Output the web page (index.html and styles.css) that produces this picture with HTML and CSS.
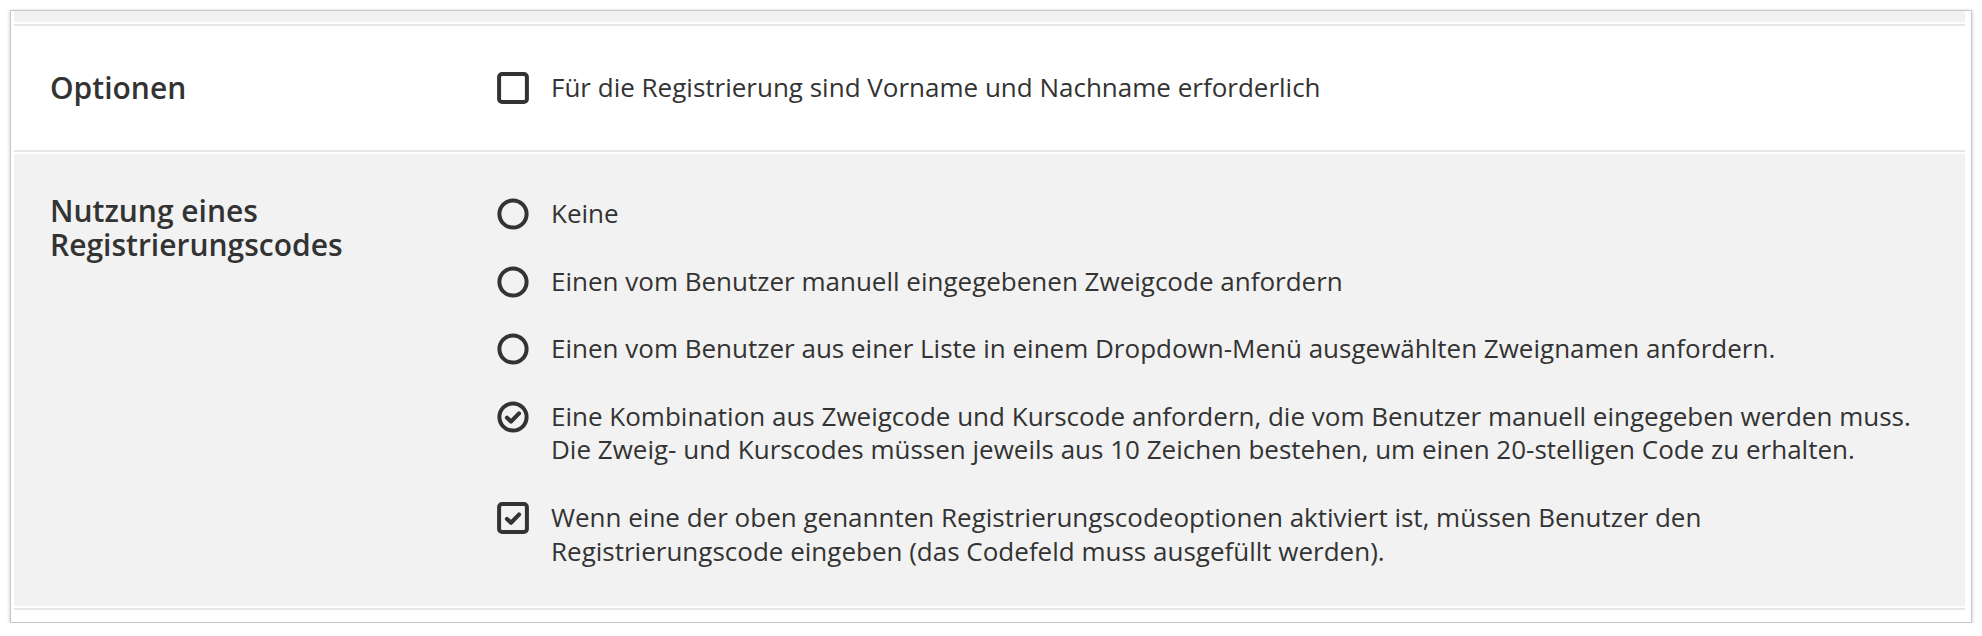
FILE: index.html
```html
<!DOCTYPE html>
<html lang="de">
<head>
<meta charset="utf-8">
<title>Registrierungsoptionen</title>
<link rel="stylesheet" href="styles.css">
</head>
<body>
<div class="card">
  <div class="strip"></div>
  <div class="gap"></div>
  <div class="line"></div>
  <div class="row row-white">
    <div class="label label-mid">Optionen</div>
    <div class="controls">
      <div class="item item-mid">
        <svg class="icon" viewBox="0 0 32 32" aria-hidden="true"><rect x="2.1" y="2.1" width="27.8" height="27.8" rx="3" fill="none" stroke="#333" stroke-width="4"/></svg>
        <span class="text">Für die Registrierung sind Vorname und Nachname erforderlich</span>
      </div>
    </div>
  </div>
  <div class="line"></div>
  <div class="gap"></div>
  <div class="row row-gray">
    <div class="label label-top">Nutzung eines<br>Registrierungscodes</div>
    <div class="controls">
      <div class="item">
        <svg class="icon" viewBox="0 0 32 32" aria-hidden="true"><circle cx="16" cy="16" r="13.6" fill="none" stroke="#333" stroke-width="4"/></svg>
        <span class="text">Keine</span>
      </div>
      <div class="item">
        <svg class="icon" viewBox="0 0 32 32" aria-hidden="true"><circle cx="16" cy="16" r="13.6" fill="none" stroke="#333" stroke-width="4"/></svg>
        <span class="text">Einen vom Benutzer manuell eingegebenen Zweigcode anfordern</span>
      </div>
      <div class="item">
        <svg class="icon" viewBox="0 0 32 32" aria-hidden="true"><circle cx="16" cy="16" r="13.6" fill="none" stroke="#333" stroke-width="4"/></svg>
        <span class="text">Einen vom Benutzer aus einer Liste in einem Dropdown-Menü ausgewählten Zweignamen anfordern.</span>
      </div>
      <div class="item">
        <svg class="icon" viewBox="0 0 32 32" aria-hidden="true"><circle cx="16" cy="16" r="13.6" fill="none" stroke="#333" stroke-width="4"/><path d="M10 16.8 L14 20.6 L22 12.4" fill="none" stroke="#333" stroke-width="4.2" stroke-linecap="round" stroke-linejoin="round"/></svg>
        <span class="text">Eine Kombination aus Zweigcode und Kurscode anfordern, die vom Benutzer manuell eingegeben werden muss.<br>Die Zweig- und Kurscodes müssen jeweils aus 10 Zeichen bestehen, um einen 20-stelligen Code zu erhalten.</span>
      </div>
      <div class="item">
        <svg class="icon" viewBox="0 0 32 32" aria-hidden="true"><rect x="2.1" y="2.1" width="27.8" height="27.8" rx="3" fill="none" stroke="#333" stroke-width="4"/><path d="M10 17 L14 20.8 L22 12.6" fill="none" stroke="#333" stroke-width="4.2" stroke-linecap="round" stroke-linejoin="round"/></svg>
        <span class="text">Wenn eine der oben genannten Registrierungscodeoptionen aktiviert ist, müssen Benutzer den<br>Registrierungscode eingeben (das Codefeld muss ausgefüllt werden).</span>
      </div>
    </div>
  </div>
  <div class="gap"></div>
  <div class="line"></div>
  <div class="stub"></div>
</div>
</body>
</html>
```

FILE: styles.css
```css
html, body {
  margin: 0;
  padding: 0;
  background: #ffffff;
}

body {
  font-family: "Open Sans", "Noto Sans", "Liberation Sans", sans-serif;
  color: #333333;
}

.card {
  margin: 10px 10px 0 10px;
  border: 1px solid #c6c6c6;
  box-shadow: 0 1px 4px rgba(0, 0, 0, 0.22);
  background: #ffffff;
  padding: 0 6px 0 3px;
}

.strip {
  height: 11px;
  background: #f2f2f2;
}

.gap {
  height: 2px;
  background: #ffffff;
}

.line {
  height: 2px;
  background: #e6e6e6;
}

.stub {
  height: 12px;
  background: #ffffff;
}

.row {
  display: grid;
  grid-template-columns: 447px 1fr;
  padding-left: 36px;
}

.row-white {
  background: #ffffff;
  padding-top: 45px;
  padding-bottom: 45px;
  align-items: center;
}

.row-gray {
  background: #f2f2f2;
  padding-top: 43px;
  padding-bottom: 38px;
  align-items: start;
}

.label {
  font-size: 30px;
  font-weight: 600;
  line-height: 34px;
  color: #333333;
}

.label-top {
  margin-top: -3px;
}

.controls {
  display: flex;
  flex-direction: column;
  gap: 34px;
}

.item {
  display: flex;
  align-items: flex-start;
  gap: 22px;
}

.item-mid {
  align-items: center;
}

.icon {
  width: 32px;
  height: 32px;
  flex: 0 0 32px;
  margin-top: 1px;
}

.item-mid .icon {
  margin-top: 0;
}

.text {
  font-size: 26px;
  line-height: 33.6px;
  color: #333333;
}
```
